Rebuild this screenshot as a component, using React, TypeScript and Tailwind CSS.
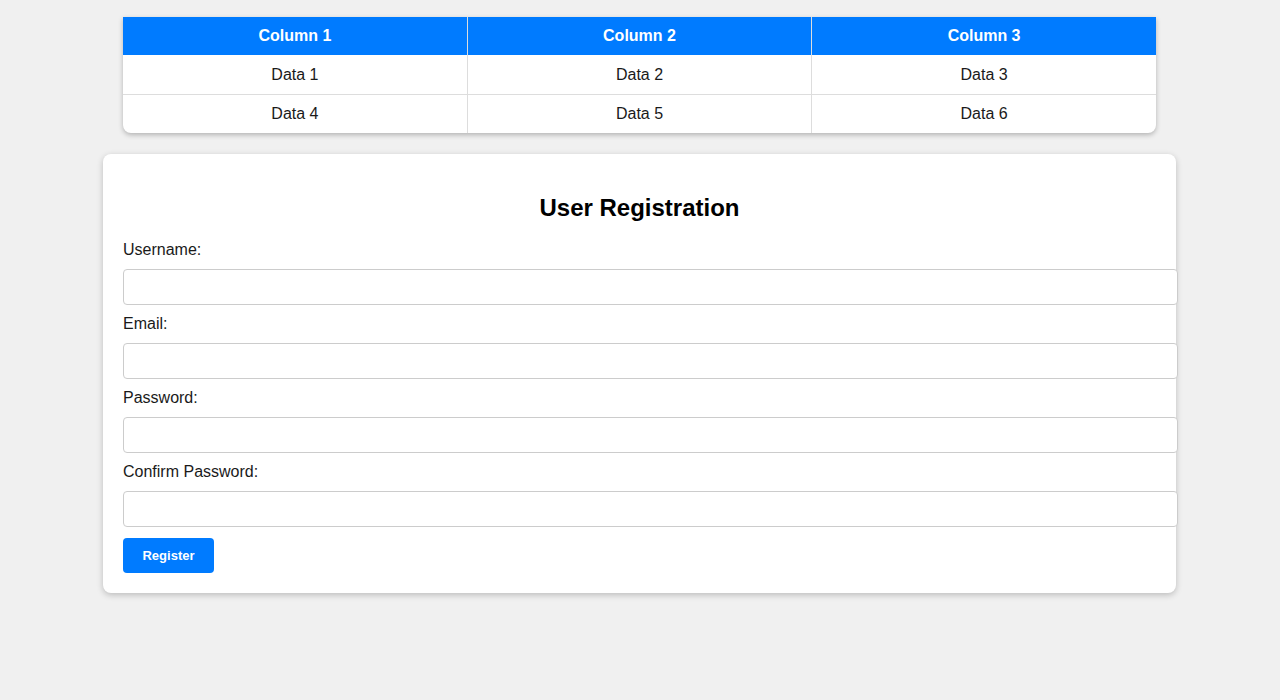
import React from "react";

export default function App() {
  const rows = [
    ["Data 1", "Data 2", "Data 3"],
    ["Data 4", "Data 5", "Data 6"],
  ];
  const fields = ["Username:", "Email:", "Password:", "Confirm Password:"];
  return (
    <div className="min-h-[700px] w-full bg-[#f0f0f0] pt-[17px] pr-px font-['Liberation_Sans',Arial,sans-serif] text-[16px] text-[#1a1a1a]">
      <div className="mx-auto w-[1033px] overflow-hidden rounded-b-lg bg-white shadow-[0_2px_5px_rgba(0,0,0,0.25)]">
        <table className="w-full table-fixed border-collapse">
          <thead>
            <tr className="bg-[#007bff] text-white">
              {["Column 1", "Column 2", "Column 3"].map((c, i) => (
                <th
                  key={c}
                  className={`h-[38px] p-0 text-center font-bold ${i > 0 ? "border-l border-[#dddddd]" : ""}`}
                >
                  {c}
                </th>
              ))}
            </tr>
          </thead>
          <tbody>
            {rows.map((r, ri) => (
              <tr key={ri} className={ri > 0 ? "border-t border-[#dddddd]" : ""}>
                {r.map((d, i) => (
                  <td
                    key={d}
                    className={`h-[39px] p-0 pt-px text-center ${i > 0 ? "border-l border-[#dddddd]" : ""}`}
                  >
                    {d}
                  </td>
                ))}
              </tr>
            ))}
          </tbody>
        </table>
      </div>

      <div className="mx-auto mt-[21px] w-[1073px] rounded-lg bg-white p-5 shadow-[0_2px_6px_rgba(0,0,0,0.22)]">
        <h2 className="mt-5 mb-5 text-center text-[24px] leading-[27px] font-bold text-black">
          User Registration
        </h2>
        {fields.map((f) => (
          <div key={f}>
            <label className="block h-[18px] leading-[18px] text-[16px]">{f}</label>
            <input
              type="text"
              className="mt-[10px] mb-[10px] block h-[36px] w-[1055px] rounded border border-[#cccccc] bg-white px-[10px] outline-none"
            />
          </div>
        ))}
        <button className="mt-[11px] block h-[35px] w-[91px] rounded bg-[#007bff] text-[13px] font-bold text-white">
          Register
        </button>
      </div>
    </div>
  );
}
